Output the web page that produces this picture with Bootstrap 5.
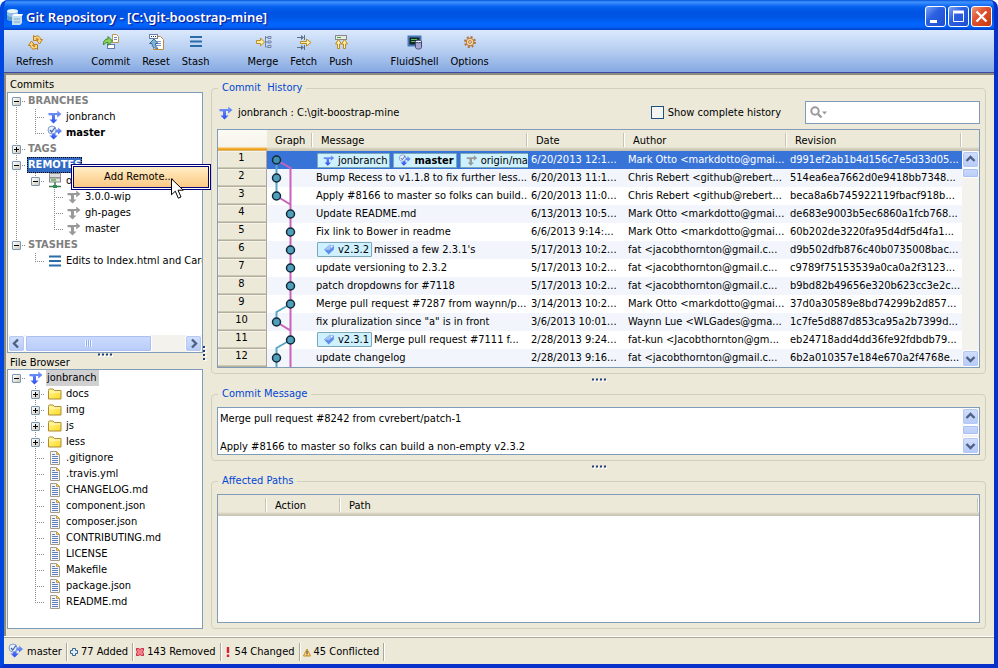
<!DOCTYPE html>
<html lang="en">
<head>
<meta charset="utf-8">
<meta name="viewport" content="width=device-width, initial-scale=1">
<title>Git Repository - [C:\git-boostrap-mine]</title>
<link href="https://cdn.jsdelivr.net/npm/bootstrap@5.3.0/dist/css/bootstrap.min.css" rel="stylesheet">
<style>
:root{--face:#ece9d8;--edge:#7f9db9;--group:#d0d0bf;--ui:"DejaVu Sans Condensed","DejaVu Sans",sans-serif}
body{font:11px/14px var(--ui);color:#000;background:#fff}
button,input,textarea{font:inherit;color:inherit}
svg{display:block;flex:none}
.win{height:100vh;min-height:560px;background:#0831d9;border-radius:8px 8px 0 0;overflow:hidden;border:solid #0046e0;border-width:0 4px 4px;border-color:#0046e0 #0831c9 #0831c9 #0046e0}
.titlebar{height:30px;margin:0 -4px;padding:3px 6px 0 6px;background:linear-gradient(#0a50d8 0,#3d95ff 2px,#2a7cf8 4px,#0360ee 7px,#0054e3 12px,#0055e5 17px,#0066ff 24px,#0060f5 27px,#0040c8 30px)}
.titlebar h1{font:600 13px/20px "Noto Sans","Open Sans",sans-serif;color:#fff;text-shadow:1px 1px 1px #0f1089;padding-left:2px}
.capbtn{width:21px;height:21px;border:1px solid #fff;border-radius:3px;background:linear-gradient(135deg,#7ba4f4,#2d61e4 40%,#1c4ed0)}
.capbtn.shut{background:linear-gradient(135deg,#f0987c,#e0532f 40%,#c8380f)}
.capset{gap:2px}
.tools{height:43px;padding:3px 6px 0;background:linear-gradient(#dbe9fc,#b9d0f2 45%,#86a9e2);border-bottom:1px solid #3b4aa8}
.tools button{padding:0 6px;line-height:14px}
.tools .glyph{height:22px}
.gap-group{margin-right:26px}
.workarea{background:var(--face);border:solid #8c8a7c;border-width:2px 0 0 2px;padding:2px 8px 7px 1px}
.leftpane{width:196px}
.pane{background:#fff;border:1px solid var(--edge)}
.half{flex:1 1 0;min-height:0}
.panelabel{height:15px;line-height:16px;padding-left:3px}
.panelabel.low{height:14px}
.tree{list-style:none;margin:0;padding:0}
.node{height:16px;line-height:16px;white-space:nowrap}
.cel{width:19px;height:16px;flex:none;background-repeat:no-repeat}
.v{background:repeating-linear-gradient(#8a8a8a 0 1px,transparent 1px 2px) 8px 0/1px 16px no-repeat}
.tee{background:repeating-linear-gradient(#8a8a8a 0 1px,transparent 1px 2px) 8px 0/1px 16px no-repeat,repeating-linear-gradient(90deg,#8a8a8a 0 1px,transparent 1px 2px) 8px 8px/10px 1px no-repeat}
.ell{background:repeating-linear-gradient(#8a8a8a 0 1px,transparent 1px 2px) 8px 0/1px 9px no-repeat,repeating-linear-gradient(90deg,#8a8a8a 0 1px,transparent 1px 2px) 8px 8px/10px 1px no-repeat}
.top1{background:repeating-linear-gradient(#8a8a8a 0 1px,transparent 1px 2px) 8px 8px/1px 8px no-repeat,repeating-linear-gradient(90deg,#8a8a8a 0 1px,transparent 1px 2px) 8px 8px/10px 1px no-repeat}
.dash{background:repeating-linear-gradient(90deg,#8a8a8a 0 1px,transparent 1px 2px) 8px 8px/10px 1px no-repeat}
.tog{width:9px;height:9px;margin:4px 0 0 4px;padding:0;border:1px solid #7898b5;border-radius:1px;background:linear-gradient(135deg,#fff,#cfc9b8)}
.tog svg{width:7px;height:7px}
.ico{width:16px;height:16px;margin:0 3px 0 1px}
.head{color:#808080;font-weight:700;padding:0 1px}
.head.on{background:#316ac5;color:#fff;outline:1px dotted #000;outline-offset:-1px}
.sel{background:#d0d0d0;padding:0 3px 0 1px;margin-left:-1px}
.grip-h{height:5px}
.grip-h svg{margin:auto}
.grip-h.tight{height:2px}
.grip-v{width:8px}
.sbar{background:#f3f2ec}
.sbtn{width:17px;height:17px;padding:0;border:1px solid #fff;border-radius:3px;background:linear-gradient(#d3dffc,#b5caf8);outline:1px solid #b7c9f3;outline-offset:-2px}
.thumb{background:linear-gradient(#cbd9fd,#b9cdf9);border:1px solid #fff;border-radius:2px;box-shadow:inset 0 0 0 1px #a9c0f0}
.hthumb{width:127px;height:17px}
.vthumb{height:10px;width:17px}
fieldset.group{border:1px solid var(--group);border-radius:4px;padding:0 5px 5px;margin:0}
fieldset.group>legend{float:none;width:auto;font-size:11px;line-height:14px;color:#0046d5;padding:0 4px;margin:0 0 0 1px}
.inset-top{margin-top:6px}
.histbar{padding:6px 0 5px}
.checkrow input[type=checkbox]{width:13px;height:13px;margin:0;border:1px solid #1c5180;border-radius:0;background-color:#f4f4f0}
.search{width:175px;height:23px}
.search input{border:0;outline:0;min-width:0;background:transparent}
table.grid{table-layout:fixed;border-collapse:separate;border-spacing:0;margin:0;width:100%}
.grid th,.grid td{padding:0 0 0 3px;overflow:hidden;white-space:nowrap}
.grid thead th{height:21px;font-weight:400;padding:0 0 0 8px;background-image:linear-gradient(#c7c5b2,#c7c5b2),linear-gradient(#fff,#fff),linear-gradient(#ece9d8 17px,#dedac9 18px,#c9c5b4 20px);background-size:1px 14px,1px 14px,100% 100%;background-position:calc(100% - 1px) 3px,100% 3px,0 0;background-repeat:no-repeat}
.grid thead th.corner{background:linear-gradient(#fbfaf4,#f6f4ea 17px,#f5b84a 18px,#e8970f 20px,#d8d4c2 21px)}
.grid tbody tr{height:18px}
.grid tbody td,.grid tbody th{height:18px;line-height:16px}
.grid tbody th{font-weight:400;text-align:center;padding:0 1px 3px 0;line-height:14px;background:#ece9d8;border-right:1px solid #aca899;border-bottom:1px solid #b4af9c;box-shadow:inset 0 -1px #ccc8b6,inset 1px 1px #f6f4ea}
.grid tbody tr:nth-child(even) td{background:#f2f6fc}
.grid tbody tr.picked td{background:#3874d8;color:#fff}
.grid tbody td.gcell{padding:0}
.tags{gap:2px}
.reftag{height:15px;flex:none;padding:0 2px 0 3px;border:1px solid #7ba7b8;border-radius:1px;background:#cdf1ff;color:#000;line-height:14px;margin-left:1px}
.reftag .ico{width:14px;height:13px;margin-right:2px}
.headfill{height:21px;background:linear-gradient(#ece9d8 17px,#dedac9 18px,#c9c5b4 20px)}
.msg{height:48px}
.msg textarea{border:0;outline:0;resize:none;overflow:hidden;padding:4px 2px 0;line-height:14px;background:#fff;min-width:0}
.statusbar{height:28px;background:var(--face);border-top:1px solid #fff;box-shadow:inset 0 1px #aca899;padding-top:6px;line-height:18px}
.statusbar>div{height:18px;padding:0 4px 0 3px;border-right:1px solid #aca899;box-shadow:1px 0 #fff;gap:3px}
.ctx{position:absolute;left:71px;top:164px;width:140px;border:1px solid #00007b;background:#fff;padding:1px;z-index:5}
.ctx button{display:block;border:1px solid #00007b;background:linear-gradient(#ffeec6,#ffd9a0 55%,#fcca86);height:22px;width:100%;padding:0 4px 0 0;text-align:center}
.pointer{position:absolute;left:171px;top:178px;z-index:6}
</style>
<script src="https://cdn.jsdelivr.net/npm/bootstrap@5.3.0/dist/js/bootstrap.bundle.min.js"></script>
</head>
<body>
<svg width="0" height="0" class="position-absolute" aria-hidden="true">
<defs>
<linearGradient id="fold" x1="0" y1="0" x2="1" y2="1"><stop offset="0" stop-color="#fff9a0"/><stop offset="1" stop-color="#fbd91c"/></linearGradient>
<linearGradient id="blu" x1="0" y1="0" x2="0" y2="1"><stop offset="0" stop-color="#7fa0f8"/><stop offset="1" stop-color="#2a4cf0"/></linearGradient>
<symbol id="branch" viewBox="0 0 16 16"><path d="M1.500 4h8.700V1.600L14.500 5l-4.300 3.400V6H8v4.500h2.500L6.500 14.500 2.500 10.500H5V7.500C5 6.500 4.500 6.300 3.500 6.300H1.500z" fill="url(#blu)"/></symbol>
<symbol id="rbranch" viewBox="0 0 16 16"><path d="M1.500 4h8.700V1.600L14.500 5l-4.300 3.400V6H8v4.500h2.500L6.500 14.500 2.500 10.500H5V7.500C5 6.500 4.500 6.300 3.500 6.300H1.500z" fill="#9a9a9a"/></symbol>
<symbol id="cur" viewBox="0 0 16 16"><path d="M8 4.500h3V2.500L15 6l-4 3.500v-2H8.500V10.500h2.300L6.600 14.500 2.500 10.500H5V7z" fill="url(#blu)"/><circle cx="5" cy="5" r="4" fill="#e8f1ff" stroke="#7f9bd8"/><path d="M3 5l1.700 2L8 2.500" fill="none" stroke="#3f5fa0" stroke-width="1.200"/></symbol>
<symbol id="bars" viewBox="0 0 16 16"><path d="M2 3.500h12M2 8h12M2 12.500h12" stroke="#2a6ca8" stroke-width="2"/></symbol>
<symbol id="server" viewBox="0 0 16 16"><rect x="2.500" y=".5" width="11" height="4" fill="#ddd" stroke="#999"/><rect x="2.500" y="5" width="11" height="4" fill="#e4e4e4" stroke="#888"/><path d="M4 7h5" stroke="#5fae4d" stroke-width="1.500"/><path d="M8 9v4M2 13.500h12" stroke="#3c7a4c" stroke-width="1.500"/><rect x="6" y="12" width="4" height="3" fill="#2f8a57"/></symbol>
<symbol id="folder" viewBox="0 0 16 16"><path d="M1.500 4.500c0-1 .3-1.500 1-1.500h3.500l1.500 1.500h6.500v8.500H1.500z" fill="url(#fold)" stroke="#b08b34"/><path d="M2.500 6h11" stroke="#fff" stroke-opacity=".7"/></symbol>
<symbol id="doc" viewBox="0 0 16 16"><path d="M3.500 1.500h6l3 3v10h-9z" fill="#f3f7fd" stroke="#a39c88"/><path d="M9.500 1.500v3h3z" fill="#f0c97c" stroke="#c99e50"/><path d="M5 4.500h3M5 6.500h6M5 8.500h6M5 10.500h6M5 12.500h6" stroke="#5d7fbd"/></symbol>
<symbol id="tagi" viewBox="0 0 16 16"><path d="M2 8L9 2l5 1v5l-6.500 6z" fill="#5f8ee8"/><path d="M2 8L9 2l5 1L8 9z" fill="#9fc0f8"/><circle cx="11.500" cy="4.500" r="1" fill="#fff"/></symbol>
<symbol id="minus" viewBox="0 0 7 7"><path d="M1 3.500h5" stroke="#000"/></symbol>
<symbol id="plus" viewBox="0 0 7 7"><path d="M1 3.500h5M3.500 1v5" stroke="#000"/></symbol>
<symbol id="gripx" viewBox="0 0 16 4"><path d="M2 3h2M6 3h2M10 3h2M14 3h2" stroke="#fff" stroke-width="2"/><path d="M1 1.500h2M5 1.500h2M9 1.500h2M13 1.500h2" stroke="#1f3d78" stroke-width="2"/></symbol>
<symbol id="g1" viewBox="0 0 46 18"><path d="M9.500 9v9" stroke="#58a8c4" stroke-width="2"/><path d="M9.500 9L23.500 17v1" fill="none" stroke="#c763bb" stroke-width="2"/><circle cx="9.500" cy="9" r="4" fill="#3f8fae" stroke="#12293a" stroke-width="1.500"/></symbol>
<symbol id="g2" viewBox="0 0 46 18"><path d="M9.500 0v18" stroke="#58a8c4" stroke-width="2"/><path d="M23.500 0v18" stroke="#c763bb" stroke-width="2"/><circle cx="9.500" cy="9" r="4" fill="#4f9fbb" stroke="#12293a" stroke-width="1.500"/></symbol>
<symbol id="g3" viewBox="0 0 46 18"><path d="M9.500 0v9" stroke="#58a8c4" stroke-width="2"/><path d="M23.500 0v18M9.500 9L23.500 17.500" stroke="#c763bb" stroke-width="2"/><circle cx="9.500" cy="9" r="4" fill="#4f9fbb" stroke="#12293a" stroke-width="1.500"/></symbol>
<symbol id="g4" viewBox="0 0 46 18"><path d="M23.500 0v18" stroke="#c763bb" stroke-width="2"/><circle cx="23.500" cy="9" r="4" fill="#4f9fbb" stroke="#12293a" stroke-width="1.500"/></symbol>
<symbol id="g9" viewBox="0 0 46 18"><path d="M23.500 0v18" stroke="#c763bb" stroke-width="2"/><path d="M23.500 9L9.500 17v1" fill="none" stroke="#58a8c4" stroke-width="2"/><circle cx="23.500" cy="9" r="4" fill="#4f9fbb" stroke="#12293a" stroke-width="1.500"/></symbol>
</defs>
</svg>

<div class="win d-flex flex-column">
<header class="titlebar d-flex align-items-center">
<svg width="18" height="18" viewBox="0 0 18 18" aria-hidden="true"><path d="M1 3v8c0 1 3 2 6 2s5-1 5-2V3" fill="#8fc0e4"/><path d="M1 7v4c0 1 3 2 6 2v-4c-3 0-6-1-6-2z" fill="#5c9ccc"/><ellipse cx="6.500" cy="3" rx="5.500" ry="2" fill="#e8f4fc"/><path d="M6 8h8l2-1v8l-2 2H6z" fill="#c4dff0"/><path d="M6 8l2-2h9l-1 2z" fill="#fff"/><path d="M8 11h6M8 14h6" stroke="#79a9cc"/></svg>
<h1 class="mb-0 flex-grow-1 text-truncate">Git Repository - [C:\git-boostrap-mine]</h1>
<div class="capset d-flex ms-2">
<button class="capbtn d-flex p-0" type="button" aria-label="Minimize"><svg width="19" height="19"><path d="M4 14.500h7" stroke="#fff" stroke-width="3"/></svg></button>
<button class="capbtn d-flex p-0" type="button" aria-label="Maximize"><svg width="19" height="19"><path d="M4.500 4v10.500h10V4M4 5h11" fill="none" stroke="#fff"/><path d="M4 5h11" stroke="#fff" stroke-width="3"/></svg></button>
<button class="capbtn shut d-flex p-0" type="button" aria-label="Close"><svg width="19" height="19"><path d="M4.500 4.500l10 10M14.500 4.500l-10 10" stroke="#fff" stroke-width="2.400"/></svg></button>
</div>
</header>

<nav class="tools d-flex align-items-start" aria-label="Repository actions">
<button class="bg-transparent border-0 gap-group" type="button"><span class="glyph d-flex justify-content-center"><svg width="18" height="18" viewBox="0 0 18 18"><g id="swirl"><path d="M7.500 7.500V2.500L9 3.800C11.500 2 14 3 14.500 6.500L16.500 6.500 13.500 11 10.500 7 12.300 6.800C12 5.300 11 5 10.300 5.500L11.800 7.200z" fill="#fbd780" stroke="#c07c18" stroke-linejoin="round"/></g><use href="#swirl" transform="rotate(180 9.500 9.500)"/></svg></span>Refresh</button>
<button class="bg-transparent border-0" type="button"><span class="glyph d-flex justify-content-center"><svg width="18" height="18" viewBox="0 0 18 18"><path d="M10.500 1.500h4l2 2v6h-6z" fill="#fff" stroke="#b99550"/><path d="M12 4.500h3M12 6.500h3" stroke="#6a85bb"/><rect x="5.500" y="11.500" width="7" height="4" fill="#fff" stroke="#5d7fb0"/><path d="M1.500 12C1 8 3 6 6 6V3.500L10.500 8 6 12.500V9.500C4 9.500 3 10 1.500 12z" fill="#8fd05a" stroke="#388328"/></svg></span>Commit</button>
<button class="bg-transparent border-0" type="button"><span class="glyph d-flex justify-content-center"><svg width="18" height="18" viewBox="0 0 18 18"><path d="M6.500 3.500h7l3 3v10h-10z" fill="#fff" stroke="#c08a38"/><path d="M9 8.500h5M9 10.500h5M9 12.500h5" stroke="#7d97c8"/><rect x="2.500" y="1.500" width="8" height="4" fill="#fff" stroke="#6680a8"/><path d="M4 3.500h5" stroke="#333" stroke-dasharray="1 1"/><path d="M11 15.500C7 15.500 5 14 5 10.500H2.500L7 6l4 4.500H8.500C8.500 13 9 14 11 15.500z" fill="#7fb4d8" stroke="#3a6d98"/></svg></span>Reset</button>
<button class="bg-transparent border-0 gap-group" type="button"><span class="glyph d-flex justify-content-center"><svg width="18" height="18" viewBox="0 0 18 18"><path d="M3 4h12M3 8.500h12M3 13h12" stroke="#2a6ca8" stroke-width="2"/></svg></span>Stash</button>
<button class="bg-transparent border-0" type="button"><span class="glyph d-flex justify-content-center"><svg width="18" height="18" viewBox="0 0 18 18"><path d="M2.500 8.500h4V6l4 4-4 4v-2.500h-4z" transform="translate(0 -1)" fill="#fff2a8" stroke="#c08a20"/><path d="M11.500 3v11M11.500 4.500h3M11.500 9h3M11.500 14h3" stroke="#6f83a8"/><path d="M14 3.500h3v2h-3zM14 8h3v2h-3zM14 12.500h3v2h-3z" fill="#cfdcf2" stroke="#6f83a8"/></svg></span>Merge</button>
<button class="bg-transparent border-0" type="button"><span class="glyph d-flex justify-content-center"><svg width="18" height="18" viewBox="0 0 18 18"><path d="M2 4.500h6M2 14.500h6M9.500 2v5M9.500 12v5" stroke="#5f6f88"/><path d="M6 2l3 2.500L6 7zM6 12l3 2.500L6 17z" fill="#5f6f88"/><path d="M5.500 8.500h6V6l4.500 3.500-4.500 3.500V10.500h-6z" fill="#fff2a8" stroke="#c08a20"/></svg></span>Fetch</button>
<button class="bg-transparent border-0 gap-group" type="button"><span class="glyph d-flex justify-content-center"><svg width="18" height="18" viewBox="0 0 18 18"><rect x="3.500" y="2.500" width="11" height="4" fill="#e8ece6" stroke="#888"/><path d="M5 4.500h4" stroke="#49a540"/><path d="M5.500 15.500V11H3.500L6.500 6.500l3 4.500H7.500v4.500zM11.500 15.500V11H9.500l3-4.500 3 4.500h-2v4.500z" fill="#fff2a8" stroke="#c08a20"/></svg></span>Push</button>
<button class="bg-transparent border-0" type="button"><span class="glyph d-flex justify-content-center"><svg width="18" height="18" viewBox="0 0 18 18"><rect x="2.500" y="3.500" width="12" height="9" fill="#15251f" stroke="#4579bb" stroke-width="2"/><path d="M5 6.500h6M5 8.500h4" stroke="#58c060"/><path d="M9.500 8.500v6c0 2 6 2 6 0v-6" fill="#a6a8d3" stroke="#444877"/><ellipse cx="12.500" cy="8.500" rx="3" ry="1.300" fill="#eceefb" stroke="#444877"/></svg></span>FluidShell</button>
<button class="bg-transparent border-0" type="button"><span class="glyph d-flex justify-content-center"><svg width="18" height="18" viewBox="0 0 18 18"><circle cx="9" cy="9" r="5" fill="none" stroke="#b0743c" stroke-width="2" stroke-dasharray="2 1.930"/><circle cx="9" cy="9" r="3.800" fill="#fbd99a" stroke="#b0743c"/><circle cx="9" cy="9" r="1.400" fill="#fff" stroke="#b0743c"/></svg></span>Options</button>
</nav>

<main class="workarea d-flex flex-grow-1">
<aside class="leftpane d-flex flex-column flex-shrink-0">
<div class="panelabel" id="cl">Commits</div>
<section class="pane half d-flex flex-column overflow-hidden">
<ul class="tree flex-grow-1 overflow-hidden" aria-labelledby="cl">
<li class="node d-flex"><span class="cel top1"><button class="tog d-block" type="button" aria-label="Collapse"><svg><use href="#minus"/></svg></button></span><span class="head">BRANCHES</span></li>
<li class="node d-flex"><span class="cel v"></span><span class="cel tee"></span><svg class="ico"><use href="#branch"/></svg><span>jonbranch</span></li>
<li class="node d-flex"><span class="cel v"></span><span class="cel ell"></span><svg class="ico"><use href="#cur"/></svg><strong>master</strong></li>
<li class="node d-flex"><span class="cel tee"><button class="tog d-block" type="button" aria-label="Expand"><svg><use href="#plus"/></svg></button></span><span class="head">TAGS</span></li>
<li class="node d-flex"><span class="cel tee"><button class="tog d-block" type="button" aria-label="Collapse"><svg><use href="#minus"/></svg></button></span><span class="head on">REMOTES</span></li>
<li class="node d-flex"><span class="cel v"></span><span class="cel ell"><button class="tog d-block" type="button" aria-label="Collapse"><svg><use href="#minus"/></svg></button></span><svg class="ico"><use href="#server"/></svg><span>origin</span></li>
<li class="node d-flex"><span class="cel v"></span><span class="cel"></span><span class="cel tee"></span><svg class="ico"><use href="#rbranch"/></svg><span>3.0.0-wip</span></li>
<li class="node d-flex"><span class="cel v"></span><span class="cel"></span><span class="cel tee"></span><svg class="ico"><use href="#rbranch"/></svg><span>gh-pages</span></li>
<li class="node d-flex"><span class="cel v"></span><span class="cel"></span><span class="cel ell"></span><svg class="ico"><use href="#rbranch"/></svg><span>master</span></li>
<li class="node d-flex"><span class="cel ell"><button class="tog d-block" type="button" aria-label="Collapse"><svg><use href="#minus"/></svg></button></span><span class="head">STASHES</span></li>
<li class="node d-flex"><span class="cel"></span><span class="cel ell"></span><svg class="ico"><use href="#bars"/></svg><span>Edits to Index.html and Carc</span></li>
</ul>
<div class="sbar d-flex">
<button class="sbtn d-flex" type="button" aria-label="Scroll left"><svg width="15" height="15"><path d="M9 3.500l-4 4 4 4" fill="none" stroke="#4d6185" stroke-width="2.400"/></svg></button>
<div class="thumb hthumb d-flex justify-content-center align-items-center"><svg width="9" height="7"><path d="M1.500 0v7M3.500 0v7M5.500 0v7M7.500 0v7" stroke="#eef4fe"/><path d="M2.500 0v7M4.500 0v7M6.500 0v7" stroke="#8cb0f8"/></svg></div>
<button class="sbtn d-flex ms-auto" type="button" aria-label="Scroll right"><svg width="15" height="15"><path d="M6 3.500l4 4-4 4" fill="none" stroke="#4d6185" stroke-width="2.400"/></svg></button>
</div>
</section>
<div class="grip-h tight"><svg width="16" height="4"><use href="#gripx"/></svg></div>
<div class="panelabel low" id="fb">File Browser</div>
<section class="pane half overflow-hidden">
<ul class="tree" aria-labelledby="fb">
<li class="node d-flex"><span class="cel dash"><button class="tog d-block" type="button" aria-label="Collapse"><svg><use href="#minus"/></svg></button></span><svg class="ico"><use href="#branch"/></svg><span class="sel">jonbranch</span></li>
<li class="node d-flex"><span class="cel"></span><span class="cel tee"><button class="tog d-block" type="button" aria-label="Expand"><svg><use href="#plus"/></svg></button></span><svg class="ico"><use href="#folder"/></svg><span>docs</span></li>
<li class="node d-flex"><span class="cel"></span><span class="cel tee"><button class="tog d-block" type="button" aria-label="Expand"><svg><use href="#plus"/></svg></button></span><svg class="ico"><use href="#folder"/></svg><span>img</span></li>
<li class="node d-flex"><span class="cel"></span><span class="cel tee"><button class="tog d-block" type="button" aria-label="Expand"><svg><use href="#plus"/></svg></button></span><svg class="ico"><use href="#folder"/></svg><span>js</span></li>
<li class="node d-flex"><span class="cel"></span><span class="cel tee"><button class="tog d-block" type="button" aria-label="Expand"><svg><use href="#plus"/></svg></button></span><svg class="ico"><use href="#folder"/></svg><span>less</span></li>
<li class="node d-flex"><span class="cel"></span><span class="cel tee"></span><svg class="ico"><use href="#doc"/></svg><span>.gitignore</span></li>
<li class="node d-flex"><span class="cel"></span><span class="cel tee"></span><svg class="ico"><use href="#doc"/></svg><span>.travis.yml</span></li>
<li class="node d-flex"><span class="cel"></span><span class="cel tee"></span><svg class="ico"><use href="#doc"/></svg><span>CHANGELOG.md</span></li>
<li class="node d-flex"><span class="cel"></span><span class="cel tee"></span><svg class="ico"><use href="#doc"/></svg><span>component.json</span></li>
<li class="node d-flex"><span class="cel"></span><span class="cel tee"></span><svg class="ico"><use href="#doc"/></svg><span>composer.json</span></li>
<li class="node d-flex"><span class="cel"></span><span class="cel tee"></span><svg class="ico"><use href="#doc"/></svg><span>CONTRIBUTING.md</span></li>
<li class="node d-flex"><span class="cel"></span><span class="cel tee"></span><svg class="ico"><use href="#doc"/></svg><span>LICENSE</span></li>
<li class="node d-flex"><span class="cel"></span><span class="cel tee"></span><svg class="ico"><use href="#doc"/></svg><span>Makefile</span></li>
<li class="node d-flex"><span class="cel"></span><span class="cel tee"></span><svg class="ico"><use href="#doc"/></svg><span>package.json</span></li>
<li class="node d-flex"><span class="cel"></span><span class="cel ell"></span><svg class="ico"><use href="#doc"/></svg><span>README.md</span></li>
</ul>
</section>
</aside>
<div class="grip-v d-flex flex-shrink-0 align-items-center"><svg width="4" height="16"><path d="M2.500 2v14" stroke="#fff" stroke-width="2" stroke-dasharray="2 2"/><path d="M1 1v14" stroke="#1f3d78" stroke-width="2" stroke-dasharray="2 2"/></svg></div>

<div class="d-flex flex-column flex-grow-1 overflow-hidden">
<fieldset class="group mt-1">
<legend>Commit&nbsp; History</legend>
<div class="histbar d-flex align-items-center">
<svg class="ico me-0"><use href="#branch"/></svg><span class="ms-1">jonbranch : C:\git-boostrap-mine</span>
<label class="checkrow d-flex align-items-center gap-1 ms-auto"><input type="checkbox" class="form-check-input"><span>Show complete history</span></label>
<label class="search pane d-flex align-items-center ms-4"><svg class="ms-1" width="18" height="14"><circle cx="5" cy="5" r="3.700" fill="none" stroke="#9a9a9a" stroke-width="2"/><path d="M8 8l3.500 3.500" stroke="#9a9a9a" stroke-width="2.400"/><path d="M12 5.500h5l-2.500 3z" fill="#9a9a9a"/></svg><input class="flex-grow-1" type="search" aria-label="Search history"></label>
</div>
<div class="pane d-flex">
<table class="grid flex-grow-1">
<colgroup><col style="width:49px"><col style="width:46px"><col style="width:215px"><col style="width:97px"><col style="width:162px"><col></colgroup>
<thead><tr><th class="corner"></th><th>Graph</th><th>Message</th><th>Date</th><th>Author</th><th>Revision</th></tr></thead>
<tbody>
<tr class="picked"><th>1</th><td class="gcell"><svg width="46" height="18"><use href="#g1"/></svg></td><td><div class="tags d-flex"><span class="reftag d-inline-flex"><svg class="ico"><use href="#branch"/></svg>jonbranch</span><span class="reftag d-inline-flex fw-bold"><svg class="ico"><use href="#cur"/></svg>master</span><span class="reftag d-inline-flex"><svg class="ico"><use href="#rbranch"/></svg>origin/ma</span></div></td><td>6/20/2013 12:1...</td><td>Mark Otto &lt;markdotto@gmai...</td><td>d991ef2ab1b4d156c7e5d33d05...</td></tr>
<tr><th>2</th><td class="gcell"><svg width="46" height="18"><use href="#g2"/></svg></td><td>Bump Recess to v1.1.8 to fix further less...</td><td>6/20/2013 11:1...</td><td>Chris Rebert &lt;github@rebert...</td><td>514ea6ea7662d0e9418bb7348...</td></tr>
<tr><th>3</th><td class="gcell"><svg width="46" height="18"><use href="#g3"/></svg></td><td>Apply #8166 to master so folks can build...</td><td>6/20/2013 11:0...</td><td>Chris Rebert &lt;github@rebert...</td><td>beca8a6b745922119fbacf918b...</td></tr>
<tr><th>4</th><td class="gcell"><svg width="46" height="18"><use href="#g4"/></svg></td><td>Update README.md</td><td>6/13/2013 10:5...</td><td>Mark Otto &lt;markdotto@gmai...</td><td>de683e9003b5ec6860a1fcb768...</td></tr>
<tr><th>5</th><td class="gcell"><svg width="46" height="18"><use href="#g4"/></svg></td><td>Fix link to Bower in readme</td><td>6/6/2013 9:14:...</td><td>Mark Otto &lt;markdotto@gmai...</td><td>60b202de3220fa95d4df5d4fa1...</td></tr>
<tr><th>6</th><td class="gcell"><svg width="46" height="18"><use href="#g4"/></svg></td><td><div class="tags d-flex"><span class="reftag d-inline-flex"><svg class="ico"><use href="#tagi"/></svg>v2.3.2</span>missed a few 2.3.1's</div></td><td>5/17/2013 10:2...</td><td>fat &lt;jacobthornton@gmail.c...</td><td>d9b502dfb876c40b0735008bac...</td></tr>
<tr><th>7</th><td class="gcell"><svg width="46" height="18"><use href="#g4"/></svg></td><td>update versioning to 2.3.2</td><td>5/17/2013 10:2...</td><td>fat &lt;jacobthornton@gmail.c...</td><td>c9789f75153539a0ca0a2f3123...</td></tr>
<tr><th>8</th><td class="gcell"><svg width="46" height="18"><use href="#g4"/></svg></td><td>patch dropdowns for #7118</td><td>5/17/2013 10:2...</td><td>fat &lt;jacobthornton@gmail.c...</td><td>b9bd82b49656e320b623cc3e2c...</td></tr>
<tr><th>9</th><td class="gcell"><svg width="46" height="18"><use href="#g9"/></svg></td><td>Merge pull request #7287 from waynn/p...</td><td>3/14/2013 10:2...</td><td>Mark Otto &lt;markdotto@gmai...</td><td>37d0a30589e8bd74299b2d857...</td></tr>
<tr><th>10</th><td class="gcell"><svg width="46" height="18"><use href="#g3"/></svg></td><td>fix pluralization since "a" is in front</td><td>3/6/2013 10:01...</td><td>Waynn Lue &lt;WLGades@gma...</td><td>1c7fe5d887d853ca95a2b7399d...</td></tr>
<tr><th>11</th><td class="gcell"><svg width="46" height="18"><use href="#g9"/></svg></td><td><div class="tags d-flex"><span class="reftag d-inline-flex"><svg class="ico"><use href="#tagi"/></svg>v2.3.1</span>Merge pull request #7111 f...</div></td><td>2/28/2013 9:24...</td><td>fat-kun &lt;Jacobthornton@gm...</td><td>eb24718add4dd36fe92fdbdb79...</td></tr>
<tr><th>12</th><td class="gcell"><svg width="46" height="18"><use href="#g2"/></svg></td><td>update changelog</td><td>2/28/2013 9:16...</td><td>fat &lt;jacobthornton@gmail.c...</td><td>6b2a010357e184e670a2f4768e...</td></tr>
</tbody>
</table>
<div class="sbar d-flex flex-column flex-shrink-0">
<div class="headfill"></div>
<button class="sbtn d-flex" type="button" aria-label="Scroll up"><svg width="15" height="15"><path d="M3.500 9l4-4 4 4" fill="none" stroke="#4d6185" stroke-width="2.400"/></svg></button>
<div class="thumb vthumb"></div>
<button class="sbtn d-flex mt-auto" type="button" aria-label="Scroll down"><svg width="15" height="15"><path d="M3.500 6l4 4 4-4" fill="none" stroke="#4d6185" stroke-width="2.400"/></svg></button>
</div>
</div>
</fieldset>
<div class="grip-h my-1"><svg width="16" height="4"><use href="#gripx"/></svg></div>
<fieldset class="group">
<legend id="cm">Commit Message</legend>
<div class="pane msg inset-top d-flex">
<textarea class="flex-grow-1" aria-labelledby="cm" readonly>Merge pull request #8242 from cvrebert/patch-1

Apply #8166 to master so folks can build a non-empty v2.3.2</textarea>
<div class="sbar d-flex flex-column flex-shrink-0">
<button class="sbtn d-flex" type="button" aria-label="Scroll up"><svg width="15" height="15"><path d="M3.500 9l4-4 4 4" fill="none" stroke="#4d6185" stroke-width="2.400"/></svg></button>
<div class="thumb vthumb"></div>
<button class="sbtn d-flex mt-auto" type="button" aria-label="Scroll down"><svg width="15" height="15"><path d="M3.500 6l4 4 4-4" fill="none" stroke="#4d6185" stroke-width="2.400"/></svg></button>
</div>
</div>
</fieldset>
<div class="grip-h my-1"><svg width="16" height="4"><use href="#gripx"/></svg></div>
<fieldset class="group d-flex flex-column flex-grow-1">
<legend>Affected Paths</legend>
<div class="pane flex-grow-1 inset-top">
<table class="grid"><colgroup><col style="width:49px"><col style="width:74px"><col></colgroup>
<thead><tr><th></th><th>Action</th><th>Path</th></tr></thead></table>
</div>
</fieldset>
</div>
</main>

<footer class="statusbar d-flex">
<div class="d-flex"><svg class="ico me-0"><use href="#cur"/></svg>master</div>
<div class="d-flex align-items-center"><svg width="8" height="8"><path d="M2.500.5h3v2h2v3h-2v2h-3v-2h-2v-3h2z" fill="#dfeefa" stroke="#35648c"/></svg>77 Added</div>
<div class="d-flex align-items-center"><svg width="8" height="8"><path d="M.5.5h2l1.500 1 1.500-1h2v2L6.500 4l1 1.500v2h-2L4 6.500l-1.500 1h-2v-2L1.500 4l-1-1.500z" fill="#f08090" stroke="#c8283c"/></svg>143 Removed</div>
<div class="d-flex align-items-center"><svg width="8" height="10"><path d="M4 0v6M4 7.500v2.500" stroke="#dc1c30" stroke-width="2.400"/></svg>54 Changed</div>
<div class="d-flex align-items-center"><svg width="8" height="9"><path d="M4 1l3.500 7h-7z" fill="#ffe08a" stroke="#c88a20"/><path d="M4 3v3M4 6.500v1" stroke="#333"/></svg>45 Conflicted</div>
</footer>
</div>

<div class="ctx" role="menu"><button type="button" role="menuitem">Add Remote...</button></div>
<svg class="pointer" width="13" height="22" viewBox="0 0 13 22" aria-hidden="true"><path d="M.5.8v16l3.800-3.600 3 7 2.700-1.200-3-6.800h5.200z" fill="#fff" stroke="#000"/></svg>
</body>
</html>
